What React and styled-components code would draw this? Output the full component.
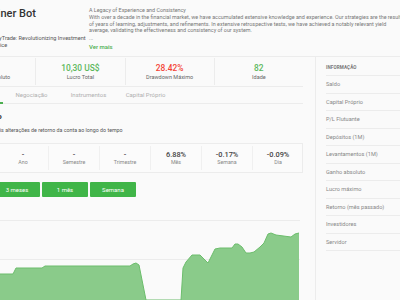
import React from "react";
import styled, { createGlobalStyle } from "styled-components";

const Global = createGlobalStyle`
  html, body { margin: 0; padding: 0; background: #fafafa; }
  body { width: 400px; height: 300px; overflow: hidden; font-family: Roboto, "Liberation Sans", sans-serif; color: #777; }
  * { box-sizing: border-box; }
`;

const Page = styled.div`
  margin-left: -54px;
  width: 500px;
`;

const Header = styled.header`
  display: flex;
  height: 57px;
  border-bottom: 1px solid #ececec;
`;

const Brand = styled.div`
  width: 143px;
  padding: 7px 0 0 42px;
`;

const Title = styled.h1`
  margin: 0;
  font-size: 11px;
  font-weight: 500;
  color: #333;
  line-height: 14px;
  white-space: nowrap;
`;

const Tagline = styled.p`
  margin: 14px 0 0 2px;
  font-size: 5.6px;
  line-height: 7px;
  color: #555;
  white-space: nowrap;
`;

const About = styled.div`
  flex: 1;
  padding-top: 7px;
  font-size: 5.4px;
  line-height: 6.6px;
  color: #777;
  white-space: nowrap;
`;

const AboutTitle = styled.div`
  margin-bottom: 0.5px;
`;

const Ellipsis = styled.div`
  margin-top: 1px;
`;

const More = styled.a`
  display: block;
  margin-top: 3px;
  color: #4caf50;
  font-weight: 500;
  font-size: 6px;
`;

const Body = styled.div`
  display: flex;
`;

const Main = styled.main`
  width: 357px;
  flex: none;
`;

const Stats = styled.div`
  display: grid;
  grid-template-columns: repeat(4, 1fr);
  height: 30px;
  border-bottom: 1px solid #ececec;
  padding-top: 1px;
`;

const Stat = styled.div`
  display: flex;
  flex-direction: column;
  align-items: center;
  justify-content: center;
  gap: 1px;
  border-left: ${p => (p.$first ? "none" : "1px solid #ececec")};
  margin: 0 0 1px;
`;

const StatValue = styled.div`
  font-size: 8.4px;
  line-height: 10px;
  font-weight: 500;
  color: ${p => p.$color};
`;

const StatLabel = styled.div`
  font-size: 5.5px;
  line-height: 7px;
  color: #666;
`;

const Tabs = styled.nav`
  display: flex;
  height: 17px;
  border-bottom: 1px solid #ececec;
`;

const Tab = styled.div`
  width: 57px;
  display: flex;
  align-items: center;
  justify-content: center;
  font-size: 6px;
  color: #b0b0b0;
  border-bottom: 2px solid ${p => (p.$active ? "#4caf50" : "transparent")};
  margin-bottom: -1px;
`;

const Section = styled.section`
  padding: 8px 0 0 10px;
`;

const SectionTitle = styled.h2`
  margin: 0;
  font-size: 8px;
  line-height: 10px;
  font-weight: 700;
  color: #333;
  white-space: nowrap;
`;

const SectionSub = styled.p`
  margin: 5px 0 0;
  font-size: 5.3px;
  line-height: 7px;
  color: #555;
  white-space: nowrap;
`;

const Periods = styled.div`
  display: grid;
  grid-template-columns: repeat(7, 51px);
  height: 30px;
  margin-top: 9px;
  border-top: 1px solid #ececec;
  border-bottom: 1px solid #ececec;
  border-right: 1px solid #ececec;
  background: #fbfbfb;
`;

const Period = styled.div`
  display: flex;
  flex-direction: column;
  align-items: center;
  justify-content: center;
  border-left: ${p => (p.$first ? "none" : "1px solid #f0f0f0")};
  margin: 2px 0;
`;

const PeriodValue = styled.div`
  font-size: 7.4px;
  line-height: 9px;
  font-weight: 500;
  color: #444;
`;

const PeriodLabel = styled.div`
  font-size: 5.3px;
  line-height: 7px;
  color: #888;
`;

const Ranges = styled.div`
  display: flex;
  gap: 2px;
  margin-top: 9px;
`;

const RangeButton = styled.button`
  width: 46px;
  height: 15px;
  border: none;
  border-radius: 1px;
  background: #40b548;
  color: #fff;
  font-family: inherit;
  font-size: 6px;
  padding: 0;
`;

const Chart = styled.div`
  margin-top: 7px;
  height: 100px;
  line-height: 0;
`;

const Sidebar = styled.aside`
  margin-left: 12px;
  border-left: 1px solid #ececec;
  padding-left: 10px;
  flex: 1;
  height: 260px;
`;

const SideHead = styled.div`
  height: 19px;
  display: flex;
  align-items: center;
  padding-top: 2px;
  font-size: 4.6px;
  font-weight: 700;
  letter-spacing: 0.1px;
  color: #777;
  border-bottom: 1px solid #ececec;
`;

const SideRow = styled.div`
  height: 17.5px;
  display: flex;
  align-items: center;
  font-size: 5.6px;
  color: #888;
  border-bottom: 1px solid #ececec;
`;

const stats = [
  { v: "41%", l: "Ganho Absoluto", c: "#5cb85c" },
  { v: "10,30 US$", l: "Lucro Total", c: "#5cb85c" },
  { v: "28.42%", l: "Drawdown Máximo", c: "#f44336" },
  { v: "82", l: "Idade", c: "#5cb85c" },
];

const periods = [
  ["-", "Total"], ["-", "Ano"], ["-", "Semestre"], ["-", "Trimestre"],
  ["6.88%", "Mês"], ["-0.17%", "Semana"], ["-0.09%", "Dia"],
];

const side = [
  "Saldo", "Capital Próprio", "P/L Flutuante", "Depósitos (1M)", "Levantamentos (1M)",
  "Ganho absoluto", "Lucro máximo", "Retorno (mês passado)", "Investidores", "Servidor",
];

const pts = [
  [-54, 274], [13, 274], [16, 268], [42, 268], [45, 266], [130, 266], [133, 264], [136, 263],
  [139, 265], [146, 300], [181, 300], [183, 268], [186, 262], [192, 255], [200, 255], [205, 260],
  [208, 263], [212, 255], [215, 249], [220, 248], [232, 248], [235, 244], [238, 244], [242, 247],
  [246, 253], [250, 253], [254, 252], [260, 247], [264, 243], [268, 234], [271, 233], [276, 235],
  [291, 237], [295, 234], [299, 233],
];

function GrowthChart() {
  const top = 204;
  const line = pts.map(([x, y], i) => `${i ? "L" : "M"}${x + 54} ${y - top}`).join(" ");
  const area = `${line} L353 100 L0 100 Z`;
  return (
    <svg width="357" height="100" viewBox="0 0 357 100">
      <line x1="0" x2="354" y1="16.5" y2="16.5" stroke="#ececec" strokeWidth="1" />
      <line x1="0" x2="354" y1="55.5" y2="55.5" stroke="#ececec" strokeWidth="1" />
      <path d={area} fill="#8acb8a" />
      <path d={line} fill="none" stroke="#6cbd6c" strokeWidth="1" />
    </svg>
  );
}

export default function App() {
  return (
    <>
      <Global />
      <Page>
        <Header>
          <Brand>
            <Title>Miner Bot</Title>
            <Tagline>
              EasyTrade: Revolutionizing Investment
              <br />
              Choice
            </Tagline>
          </Brand>
          <About>
            <AboutTitle>A Legacy of Experience and Consistency</AboutTitle>
            <div>With over a decade in the financial market, we have accumulated extensive knowledge and experience. Our strategies are the result</div>
            <div>of years of learning, adjustments, and refinements. In extensive retrospective tests, we have achieved a notably relevant yield</div>
            <div>average, validating the effectiveness and consistency of our system.</div>
            <Ellipsis>...</Ellipsis>
            <More>Ver mais</More>
          </About>
        </Header>
        <Body>
          <Main>
            <Stats>
              {stats.map((s, i) => (
                <Stat key={s.l} $first={i === 0}>
                  <StatValue $color={s.c}>{s.v}</StatValue>
                  <StatLabel>{s.l}</StatLabel>
                </Stat>
              ))}
            </Stats>
            <Tabs>
              <Tab $active>Estatísticas</Tab>
              <Tab>Negociação</Tab>
              <Tab>Instrumentos</Tab>
              <Tab>Capital Próprio</Tab>
            </Tabs>
            <Section>
              <SectionTitle>Crescimento</SectionTitle>
              <SectionSub>Mostra as principais alterações de retorno da conta ao longo do tempo</SectionSub>
            </Section>
            <Periods>
              {periods.map(([v, l], i) => (
                <Period key={l} $first={i === 0}>
                  <PeriodValue>{v}</PeriodValue>
                  <PeriodLabel>{l}</PeriodLabel>
                </Period>
              ))}
            </Periods>
            <Ranges>
              <RangeButton>6 meses</RangeButton>
              <RangeButton>3 meses</RangeButton>
              <RangeButton>1 mês</RangeButton>
              <RangeButton>Semana</RangeButton>
            </Ranges>
            <Chart>
              <GrowthChart />
            </Chart>
          </Main>
          <Sidebar>
            <SideHead>INFORMAÇÃO</SideHead>
            {side.map(s => (
              <SideRow key={s}>{s}</SideRow>
            ))}
          </Sidebar>
        </Body>
      </Page>
    </>
  );
}
